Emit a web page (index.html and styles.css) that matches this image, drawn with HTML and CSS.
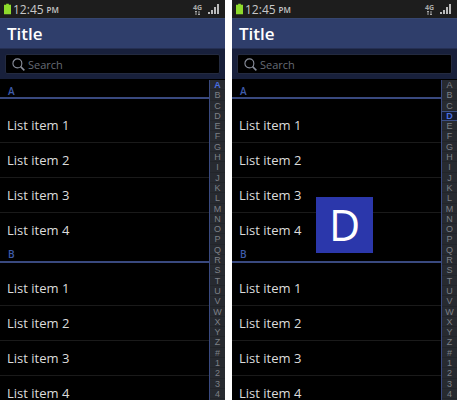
FILE: index.html
```html
<!DOCTYPE html>
<html lang="en">

<head>
    <meta charset="UTF-8">
    <title>Fast scroll list</title>
    <link rel="stylesheet" href="styles.css">
</head>

<body>
    <div class="screens">
        <div class="phone">
            <div class="status-bar">
                <svg class="battery" viewBox="0 0 8 12"><path d="M2.5 0h3v1H8v11H0V1h2.5z" fill="#8fdc2c"/></svg>
                <span class="clock">12:45</span><span class="ampm">PM</span>
                <span class="status-icons">
                    <span class="net">4G<svg viewBox="0 0 7 4"><path d="M2 4V0M1 1l1-1 1 1M5 0v4M4 3l1 1 1-1" fill="none" stroke="#aaa"/></svg></span>
                    <svg class="signal" viewBox="0 0 11 10"><path d="M0 8h2v2H0zM3 6h2v4H3zM6 3h2v7H6zM9 0h2v10H9z" fill="#bbb"/></svg>
                </span>
            </div>
            <div class="title-bar">Title</div>
            <div class="search-bar">
                <div class="search-box">
                    <svg class="search-icon" viewBox="0 0 14 14"><circle cx="5.8" cy="5.8" r="4.8" fill="none" stroke="#8a8f9c" stroke-width="1.2"/><path d="M9.3 9.3l4 4" stroke="#8a8f9c" stroke-width="1.6"/></svg>
                    <span>Search</span>
                </div>
            </div>
            <div class="content">
                <div class="list">
                    <div class="group-header first">A</div>
                    <div class="item first">List item 1</div>
                    <div class="item">List item 2</div>
                    <div class="item">List item 3</div>
                    <div class="item last">List item 4</div>
                    <div class="group-header">B</div>
                    <div class="item first">List item 1</div>
                    <div class="item">List item 2</div>
                    <div class="item">List item 3</div>
                    <div class="item last">List item 4</div>
                </div>
                <div class="index" data-active="A"></div>
            </div>
        </div>

        <div class="phone">
            <div class="status-bar">
                <svg class="battery" viewBox="0 0 8 12"><path d="M2.5 0h3v1H8v11H0V1h2.5z" fill="#8fdc2c"/></svg>
                <span class="clock">12:45</span><span class="ampm">PM</span>
                <span class="status-icons">
                    <span class="net">4G<svg viewBox="0 0 7 4"><path d="M2 4V0M1 1l1-1 1 1M5 0v4M4 3l1 1 1-1" fill="none" stroke="#aaa"/></svg></span>
                    <svg class="signal" viewBox="0 0 11 10"><path d="M0 8h2v2H0zM3 6h2v4H3zM6 3h2v7H6zM9 0h2v10H9z" fill="#bbb"/></svg>
                </span>
            </div>
            <div class="title-bar">Title</div>
            <div class="search-bar">
                <div class="search-box">
                    <svg class="search-icon" viewBox="0 0 14 14"><circle cx="5.8" cy="5.8" r="4.8" fill="none" stroke="#8a8f9c" stroke-width="1.2"/><path d="M9.3 9.3l4 4" stroke="#8a8f9c" stroke-width="1.6"/></svg>
                    <span>Search</span>
                </div>
            </div>
            <div class="content">
                <div class="list">
                    <div class="group-header first">A</div>
                    <div class="item first">List item 1</div>
                    <div class="item">List item 2</div>
                    <div class="item">List item 3</div>
                    <div class="item last">List item 4</div>
                    <div class="group-header">B</div>
                    <div class="item first">List item 1</div>
                    <div class="item">List item 2</div>
                    <div class="item">List item 3</div>
                    <div class="item last">List item 4</div>
                </div>
                <div class="index" data-active="D"></div>
                <div class="letter-popup">D</div>
            </div>
        </div>
    </div>

    <script>
        var letters = "ABCDEFGHIJKLMNOPQRSTUVWXYZ#1234".split("");
        var indexes = document.querySelectorAll(".index");

        for (var i = 0; i < indexes.length; i++) {
            var active = indexes[i].getAttribute("data-active");
            for (var j = 0; j < letters.length; j++) {
                var cell = document.createElement("div");
                cell.className = "index-cell";
                if (letters[j] == active) {
                    cell.className += active == "A" ? " current" : " current boxed";
                }
                cell.textContent = letters[j];
                indexes[i].appendChild(cell);
            }
        }
    </script>
</body>

</html>
```

FILE: styles.css
```css
html, body {
    height: 100%;
}

body {
    margin: 0;
    background-color: #fff;
    overflow: hidden;
    font-family: "Open Sans", "Noto Sans", sans-serif;
}

.screens {
    display: flex;
    gap: 7px;
    height: 400px;
}

.phone {
    width: 225px;
    height: 400px;
    display: flex;
    flex-direction: column;
    background-color: #000;
    overflow: hidden;
}

.status-bar {
    height: 18px;
    flex: none;
    display: flex;
    align-items: center;
    padding: 0 6px 0 4px;
    background-color: #1d1d1d;
    color: #c8c8c8;
}

.battery {
    width: 7px;
    height: 12px;
    margin-right: 2px;
}

.clock {
    font-size: 12px;
}

.ampm {
    font-size: 8px;
    font-weight: 600;
    margin-left: 3px;
    margin-top: 1px;
}

.status-icons {
    margin-left: auto;
    display: flex;
    align-items: center;
    gap: 6px;
}

.net {
    display: flex;
    flex-direction: column;
    align-items: center;
    font-size: 7px;
    font-weight: 700;
    line-height: 7px;
    color: #aaa;
}

.net svg {
    width: 7px;
    height: 4px;
}

.signal {
    width: 11px;
    height: 10px;
}

.title-bar {
    height: 31px;
    flex: none;
    box-sizing: border-box;
    padding-left: 7px;
    background-color: #2f3e6b;
    border-top: 1px solid #36466f;
    border-bottom: 1px solid #252f52;
    color: #fff;
    font-size: 17px;
    font-weight: 600;
    line-height: 29px;
}

.search-bar {
    height: 30px;
    flex: none;
    box-sizing: border-box;
    padding: 5px;
    background-color: #18203b;
}

.search-box {
    height: 20px;
    box-sizing: border-box;
    display: flex;
    align-items: center;
    gap: 3px;
    padding-left: 6px;
    background-color: #000;
    border: 1px solid #232a3f;
    border-radius: 2px;
    color: #666b75;
    font-size: 11px;
}

.search-icon {
    width: 13px;
    height: 13px;
}

.content {
    flex: 1;
    position: relative;
    display: flex;
    min-height: 0;
    margin-top: 1px;
}

.list {
    flex: 1;
    min-width: 0;
}

.group-header {
    height: 14px;
    padding-left: 8px;
    border-bottom: 2px solid #39497f;
    color: #3f5cab;
    font-size: 10px;
    font-weight: 600;
    line-height: 14px;
}

.group-header.first {
    height: 17px;
    line-height: 22px;
}

.item {
    height: 34px;
    padding-left: 7px;
    border-bottom: 1px solid #1a1a1a;
    color: #dcdcdc;
    font-size: 13px;
    line-height: 34px;
}

.item.first {
    height: 42px;
    line-height: 50px;
}

.group-header.first + .item.first {
    height: 43px;
    line-height: 52px;
}

.item.last {
    border-bottom: none;
}

.index {
    width: 15px;
    flex: none;
    border-left: 1px solid #39497f;
    background-color: #272a30;
}

.index-cell {
    height: 10.3px;
    box-sizing: border-box;
    border-bottom: 1px solid #22252a;
    color: #7d8087;
    font-family: "Liberation Sans", sans-serif;
    font-size: 9px;
    line-height: 10px;
    text-align: center;
}

.index-cell.current {
    color: #4a6fe0;
    font-weight: 700;
}

.index-cell.boxed {
    margin-left: -1px;
    background-color: #14192b;
    border: 1px solid #3d5088;
    border-right: none;
    line-height: 8px;
}

.letter-popup {
    position: absolute;
    left: 84px;
    top: 117px;
    width: 57px;
    height: 56px;
    background-color: #2b37ab;
    color: #fff;
    font-size: 43px;
    line-height: 56px;
    text-align: center;
}
```
